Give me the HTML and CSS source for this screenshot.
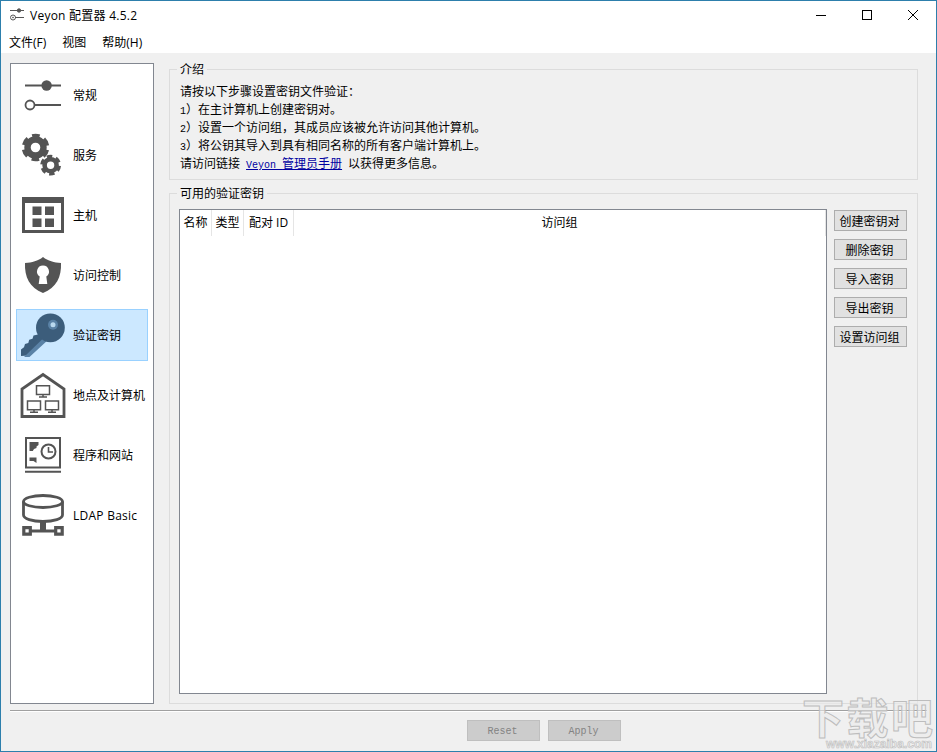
FILE: index.html
```html
<!DOCTYPE html>
<html lang="zh-CN">
<head>
    <meta charset="UTF-8">
    <meta name="viewport" content="width=device-width, initial-scale=1.0">
    <title>Veyon 配置器 4.5.2</title>
    <link rel="stylesheet" href="styles.css">
</head>
<body>
    <div class="window">
        <header class="titlebar">
            <svg class="app-icon" width="16" height="16" viewBox="0 0 16 16" fill="none" stroke="#555">
                <path d="M1 3.500h14M6 10.500h9"/>
                <circle cx="10" cy="3.500" r="1.700" fill="#555"/>
                <circle cx="4" cy="10.500" r="2.500"/>
                <circle cx="4" cy="10.500" r=".5"/>
            </svg>
            <h1>Veyon 配置器 4.5.2</h1>
            <div class="controls">
                <svg width="10" height="10" stroke="#000"><path d="M0 5.500h10"/></svg>
                <svg width="10" height="10" stroke="#000" fill="none"><rect x=".5" y=".5" width="9" height="9"/></svg>
                <svg width="10" height="10" stroke="#000"><path d="M0 0l10 10M10 0L0 10"/></svg>
            </div>
        </header>
        <nav class="menubar">
            <span>文件(F)</span>
            <span>视图</span>
            <span>帮助(H)</span>
        </nav>

        <div class="content">
            <ul class="sidebar">
                <li>
                    <svg viewBox="0 0 48 48" fill="none" stroke="#545454">
                        <path d="M6 14.500h36M16 34h26" stroke-width="1.800"/>
                        <circle cx="27.600" cy="14.500" r="5.200" fill="#545454" stroke="none"/>
                        <circle cx="11" cy="34" r="4.500" stroke-width="1.800"/>
                    </svg>
                    <span>常规</span>
                </li>
                <li>
                    <!-- each gear: a solid ring and a dashed ring of six teeth -->
                    <svg viewBox="0 0 48 48" fill="none" stroke="#545454">
                        <circle cx="16.500" cy="16.500" r="8" stroke-width="6.400"/>
                        <circle cx="16.500" cy="16.500" r="11.600" stroke-width="4.400" stroke-dasharray="7.300 4.848" stroke-dashoffset="9.720"/>
                        <circle cx="31.600" cy="34.200" r="6" stroke-width="4.600"/>
                        <circle cx="31.600" cy="34.200" r="8.700" stroke-width="3.400" stroke-dasharray="5.300 3.811" stroke-dashoffset="8.500"/>
                    </svg>
                    <span>服务</span>
                </li>
                <li>
                    <svg viewBox="0 0 48 48" fill="#545454">
                        <path fill-rule="evenodd" d="M3 6h42v36H3zM6 12v27h36V12z"/>
                        <path d="M13.500 15.500h9v8.500h-9zM26 15.500h9V24h-9zM13.500 27.500h9V36h-9zM26 27.500h9V36h-9z"/>
                    </svg>
                    <span>主机</span>
                </li>
                <li>
                    <svg viewBox="0 0 48 48" fill="#545454">
                        <path d="M24 6c5 4.200 11 5.400 18 6 .6 14-4.500 24.500-18 30C10.500 36.500 5.400 26 6 12c7-.6 13-1.800 18-6z"/>
                        <path fill="#fff" d="M24 14.500a6 6 0 0 1 3.300 11l1 7.500h-8.600l1-7.500a6 6 0 0 1 3.300-11z"/>
                    </svg>
                    <span>访问控制</span>
                </li>
                <li class="selected">
                    <svg viewBox="0 0 48 48">
                        <path fill="#3c5d7b" d="M21.500 22l5 5L9 44.500 2 45v-6.500l3-2.300 1-3.200 3.300-1 .9-3.300 3.300-1 1-3.200 3.500-.7z"/>
                        <path fill="#5a82a6" d="M23.500 28l3-3 3 3.500L10.500 46H5z"/>
                        <circle cx="31.400" cy="16.800" r="14.400" fill="#3c5d7b"/>
                        <circle cx="34" cy="13.800" r="5" fill="#5a82a6"/>
                        <circle cx="34" cy="13.800" r="2.500" fill="#b9d9ef"/>
                    </svg>
                    <span>验证密钥</span>
                </li>
                <li>
                    <svg viewBox="0 0 48 48" fill="none" stroke="#545454">
                        <path d="M3 45.500V18L24 3.500 45 18v27.500z" stroke-width="2.800"/>
                        <g stroke-width="1.500">
                            <path d="M17.500 14.800h13v8.800h-13zM24 23.500v2M20 26h8"/>
                            <path d="M8.500 30h13v8.800h-13zM15 39v2M11 41.300h8"/>
                            <path d="M26.500 30h13v8.800h-13zM33 39v2M29 41.300h8"/>
                        </g>
                    </svg>
                    <span>地点及计算机</span>
                </li>
                <li>
                    <svg viewBox="0 0 48 48" fill="none" stroke="#545454">
                        <path d="M7 7h34v29.500H7zM6 40.800h36" stroke-width="2"/>
                        <circle cx="29.500" cy="20.500" r="7" stroke-width="2"/>
                        <path d="M29.500 16v5h4.500" stroke-width="1.600"/>
                        <path d="M10.500 11h9v3l-2 1.500v1.500l-2.500 1-1.200 2h-3.300zM10.500 26.500h7V32l-3-2h-4z" fill="#545454" stroke="none"/>
                    </svg>
                    <span>程序和网站</span>
                </li>
                <li>
                    <svg viewBox="0 0 48 48" fill="none" stroke="#545454">
                        <ellipse cx="24" cy="10.500" rx="19.500" ry="6" stroke-width="2.800"/>
                        <path d="M4.500 10.500v13.500c0 3.600 8.500 6.500 19.500 6.500s19.500-2.900 19.500-6.500V10.500" stroke-width="2.800"/>
                        <path d="M24 31v8" stroke-width="6"/>
                        <path d="M12 40h24" stroke-width="3"/>
                        <path d="M4.800 36.700h6.500v6.500H4.800zM36.700 36.700h6.500v6.500h-6.500z" stroke-width="3.200"/>
                    </svg>
                    <span class="latin">LDAP Basic</span>
                </li>
            </ul>

            <main>
                <fieldset class="intro">
                    <legend>介绍</legend>
                    <p>请按以下步骤设置密钥文件验证：</p>
                    <p><span class="half">1</span>）在主计算机上创建密钥对。</p>
                    <p><span class="half">2</span>）设置一个访问组，其成员应该被允许访问其他计算机。</p>
                    <p><span class="half">3</span>）将公钥其导入到具有相同名称的所有客户端计算机上。</p>
                    <p>请访问链接<span class="half"> </span><a href="#"><span class="half">Veyon </span>管理员手册</a><span class="half"> </span>以获得更多信息。</p>
                </fieldset>
                <fieldset class="keys">
                    <legend>可用的验证密钥</legend>
                    <div class="keys-row">
                        <div class="table">
                            <div class="thead">
                                <span>名称</span>
                                <span>类型</span>
                                <span>配对 ID</span>
                                <span>访问组</span>
                            </div>
                        </div>
                        <div class="actions">
                            <button>创建密钥对</button>
                            <button>删除密钥</button>
                            <button>导入密钥</button>
                            <button>导出密钥</button>
                            <button>设置访问组</button>
                        </div>
                    </div>
                </fieldset>
            </main>
        </div>

        <footer>
            <button class="half" disabled>Reset</button>
            <button class="half" disabled>Apply</button>
        </footer>

        <svg class="watermark" width="136" height="58" viewBox="0 0 136 58">
            <text class="mark" x="2" y="41" textLength="131">下载吧</text>
            <text class="url" x="26" y="55" textLength="106" lengthAdjust="spacingAndGlyphs">www.xiazaiba.com</text>
        </svg>
    </div>
</body>
</html>
```
FILE: styles.css
```css
* {
    box-sizing: border-box;
}
body {
    margin: 0;
    font-family: "Open Sans", "Noto Sans CJK SC", sans-serif;
    font-size: 12px;
    color: #000;
}
.window {
    position: relative;
    display: flex;
    flex-direction: column;
    width: 937px;
    height: 752px;
    overflow: hidden;
    background-color: #f0f0f0;
    border: 1px solid #2d7fac;
}
.titlebar {
    display: flex;
    align-items: center;
    height: 28px;
    padding: 0 18px 0 8px;
    background-color: #fff;
}
.titlebar h1 {
    flex: 1;
    margin: 0 0 0 5px;
    font-size: 12px;
    font-weight: normal;
    letter-spacing: 0.25px;
}
.controls {
    display: flex;
    gap: 36px;
}
.controls svg {
    display: block;
}
.menubar {
    display: flex;
    gap: 16px;
    height: 24px;
    padding-left: 8px;
    line-height: 28px;
    background-color: #fff;
}
.content {
    display: flex;
    gap: 15px;
    height: 651px;
    padding: 7px 18px 0 9px;
}
.sidebar {
    display: flex;
    flex-direction: column;
    gap: 8px;
    width: 144px;
    height: 641px;
    margin: 3px 0 0;
    padding: 5px;
    list-style: none;
    background-color: #fff;
    border: 1px solid #828790;
}
.sidebar li {
    display: flex;
    align-items: center;
    gap: 6px;
    height: 52px;
    padding-left: 2px;
    border: 1px solid transparent;
    white-space: nowrap;
}
.sidebar li.selected {
    background-color: #cce8ff;
    border-color: #99d1ff;
}
.sidebar svg {
    flex: none;
    width: 48px;
    height: 48px;
}
.latin {
    letter-spacing: 0.25px;
}
main {
    flex: 1;
    display: flex;
    flex-direction: column;
    gap: 3px;
}
fieldset {
    min-width: 0;
    margin: 0;
    border: 1px solid #dcdcdc;
    font-family: "Noto Sans CJK SC", sans-serif;
}
legend {
    height: 18px;
    padding: 0 3px;
    margin-left: -3px;
    line-height: 18px;
}
.intro {
    height: 120px;
    padding: 4px 10px 7px;
}
.intro p {
    margin: 0;
    height: 18px;
    line-height: 18px;
    white-space: pre;
}
.intro a {
    color: #0000a0;
}
.half {
    font-family: "Liberation Mono", monospace;
    font-size: 10px;
}
.keys {
    height: 520px;
    margin-top: 1px;
    padding: 7px 10px 9px 9px;
}
.keys legend {
    margin-left: -2px;
}
.keys-row {
    display: flex;
    gap: 7px;
    height: 485px;
}
.table {
    flex: 1;
    background-color: #fff;
    border: 1px solid #828790;
}
.thead {
    display: grid;
    grid-template-columns: 32px 32px 50px 1fr;
    height: 26px;
    font-family: "Open Sans", "Noto Sans CJK SC", sans-serif;
    line-height: 26px;
    text-align: center;
}
.thead span {
    border-right: 1px solid #e5e5e5;
}
.actions {
    display: flex;
    flex-direction: column;
    gap: 8px;
    padding-top: 1px;
}
button {
    width: 73px;
    height: 21px;
    padding: 0 2px 0 0;
    font-family: "Noto Sans CJK SC", sans-serif;
    font-size: 12px;
    line-height: 19px;
    color: #000;
    background-color: #e1e1e1;
    border: 1px solid #adadad;
}
footer {
    display: flex;
    justify-content: center;
    gap: 8px;
    margin: 6px 9px 0;
    padding: 9px 0 0 151px;
    border-top: 1px solid #a0a0a0;
    box-shadow: inset 0 1px #fff;
}
footer button.half {
    padding: 2px 2px 0 0;
    font-family: "Liberation Mono", monospace;
    font-size: 10px;
    line-height: 17px;
    color: #838383;
    background-color: #ccc;
    border-color: #bfbfbf;
}
.watermark {
    position: absolute;
    right: 0;
    bottom: 0;
    fill: #ececec;
    fill-opacity: 0.6;
    stroke: #bdbdbd;
}
.mark {
    font-family: "Noto Sans CJK SC", sans-serif;
    font-size: 42px;
    font-weight: bold;
}
.url {
    font-family: "Liberation Sans", sans-serif;
    font-size: 12px;
    font-weight: bold;
    stroke-width: 0.6;
}
```
